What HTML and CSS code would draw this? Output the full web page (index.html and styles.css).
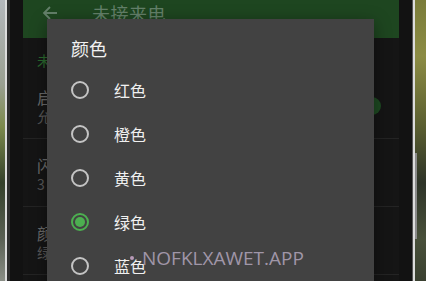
FILE: index.html
```html
<!DOCTYPE html>
<html lang="zh-CN">
<head>
    <meta charset="UTF-8">
    <meta name="viewport" content="width=device-width, initial-scale=1.0">
    <title>未接来电</title>
    <link rel="stylesheet" href="styles.css">
</head>
<body>
    <div class="screen">
        <div class="wall wall-left"></div>
        <div class="edge"></div>
        <div class="bezel bezel-left"></div>

        <div class="app">
            <div class="appbar">
                <svg class="back" width="16" height="16" viewBox="0 0 16 16">
                    <path d="M15 8H2M8 2L2 8l6 6" fill="none" stroke="currentColor" stroke-width="1.8"/>
                </svg>
                <span class="appbar-title">未接来电</span>
            </div>

            <div class="section">未接来电提醒</div>

            <div class="pref">
                <div class="pref-title">启用提醒</div>
                <div class="pref-sub">允许未接来电时闪烁提醒</div>
                <span class="toggle"></span>
            </div>
            <div class="pref">
                <div class="pref-title">闪烁次数</div>
                <div class="pref-sub">3</div>
            </div>
            <div class="pref">
                <div class="pref-title">颜色</div>
                <div class="pref-sub">绿色</div>
            </div>

            <!-- colour picker dialog -->
            <div class="dialog">
                <div class="dialog-title">颜色</div>
                <label class="option"><span class="radio"></span>红色</label>
                <label class="option"><span class="radio"></span>橙色</label>
                <label class="option"><span class="radio"></span>黄色</label>
                <label class="option"><span class="radio checked"></span>绿色</label>
                <label class="option"><span class="radio"></span>蓝色</label>
            </div>
        </div>

        <div class="bezel bezel-right"></div>
        <div class="edge edge-right"></div>
        <div class="wall wall-right"></div>

        <div class="watermark"><span class="dot"></span>NOFKLXAWET.APP</div>
    </div>
</body>
</html>
```

FILE: styles.css
```css
body {
    margin: 0;
    background: #111;
    font-family: "Noto Sans CJK SC", "Noto Sans", sans-serif;
}
.screen {
    position: relative;
    display: flex;
    width: 426px;
    height: 281px;
    overflow: hidden;
}
.wall {
    height: 100%;
}
.wall-left {
    width: 5px;
    background: linear-gradient(#b4b8bc 0%, #9aa092 30%, #7c8a4c 45%, #34402a 65%, #5a6054 85%, #8a8e86 100%);
}
.wall-right {
    width: 11px;
    background: linear-gradient(#7a7c3a 0%, #8c8c44 20%, #5a5e30 45%, #2e3428 65%, #48503a 85%, #3a4030 100%);
}
.edge {
    width: 2px;
    background: #dcdcdc;
    border-right: 3px solid #2c2c2c;
}
.edge-right {
    position: relative;
    border-right: none;
    border-left: 1px solid #555;
    width: 2px;
}
.edge-right::after {
    content: "";
    position: absolute;
    left: 2px;
    top: 153px;
    width: 2px;
    height: 86px;
    background: #8a8a8a;
}
.bezel {
    background: #121212;
}
.bezel-left {
    width: 13px;
}
.bezel-right {
    width: 13px;
}

.app {
    position: relative;
    width: 376px;
    background: #151515;
}
.appbar {
    display: flex;
    align-items: center;
    height: 38px;
    padding: 0 0 12px 19px;
    box-sizing: border-box;
    background: #1e4620;
    color: #64806a;
}
.back {
    margin-right: 34px;
}
.appbar-title {
    font-size: 18px;
    letter-spacing: 0.5px;
}
.section {
    height: 33px;
    line-height: 20px;
    padding: 12px 0 0 14px;
    box-sizing: border-box;
    font-size: 14px;
    color: #2a6a2e;
}
.pref {
    position: relative;
    height: 68px;
    padding: 16px 0 0 14px;
    box-sizing: border-box;
    border-bottom: 1px solid #242424;
}
.pref-title {
    font-size: 16px;
    line-height: 20px;
    color: #6a6a6a;
}
.pref-sub {
    font-size: 14px;
    line-height: 18px;
    color: #575757;
}
.toggle {
    position: absolute;
    left: 340px;
    top: 26px;
    width: 18px;
    height: 18px;
    border-radius: 50%;
    background: #1e4a22;
}

.dialog {
    position: absolute;
    left: 24px;
    top: 19px;
    width: 327px;
    height: 300px;
    padding: 16px 24px 0 24px;
    box-sizing: border-box;
    background: #424242;
    box-shadow: 0 4px 16px rgba(0,0,0,0.4);
}
.dialog-title {
    font-size: 18px;
    line-height: 26px;
    color: #f2f2f2;
    margin-bottom: 7px;
}
.option {
    display: flex;
    align-items: center;
    height: 44px;
    font-size: 16px;
    color: #f0f0f0;
}
.radio {
    width: 18px;
    height: 18px;
    box-sizing: border-box;
    border: 2px solid #c4c4c4;
    border-radius: 50%;
    margin-right: 25px;
    display: flex;
    align-items: center;
    justify-content: center;
}
.radio.checked {
    border-color: #4caf50;
}
.radio.checked::after {
    content: "";
    width: 10px;
    height: 10px;
    border-radius: 50%;
    background: #4caf50;
}

.watermark {
    position: absolute;
    left: 130px;
    top: 245px;
    display: flex;
    align-items: center;
    font-family: "Open Sans", sans-serif;
    font-size: 19px;
    color: #a096a8;
}
.dot {
    width: 4px;
    height: 4px;
    border-radius: 50%;
    background: #b89ab8;
    margin-right: 8px;
}
```
